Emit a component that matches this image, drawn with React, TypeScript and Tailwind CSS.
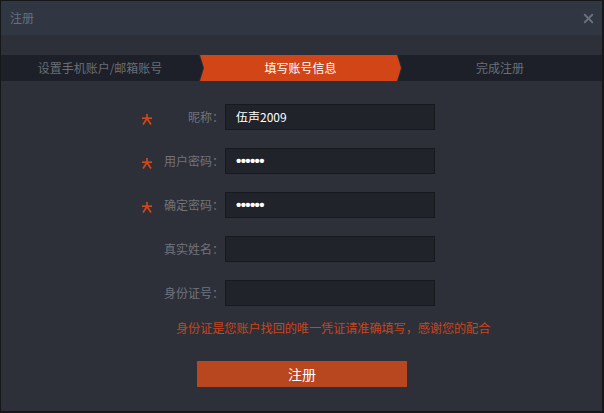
import { X } from "lucide-react";

const font = { fontFamily: '"Noto Sans CJK SC", "Microsoft YaHei", sans-serif' };

type Field = {
  label: string;
  required?: boolean;
  value?: string;
  password?: boolean;
};

const fields: Field[] = [
  { label: "昵称：", required: true, value: "伍声2009" },
  { label: "用户密码：", required: true, value: "••••••", password: true },
  { label: "确定密码：", required: true, value: "••••••", password: true },
  { label: "真实姓名：" },
  { label: "身份证号：" },
];

function Star() {
  return (
    <svg width="10" height="11" viewBox="0 0 10 11" className="mt-[5px]">
      <g stroke="#d1481b" strokeWidth="1.7" strokeLinecap="butt" fill="none">
        <line x1="5" y1="0" x2="5" y2="5" />
        <line x1="0" y1="4.2" x2="10" y2="4.2" />
        <line x1="5" y1="4.5" x2="1" y2="10.5" />
        <line x1="5" y1="4.5" x2="9" y2="10.5" />
      </g>
    </svg>
  );
}

function FormRow({ field }: { field: Field }) {
  return (
    <div className="flex items-center h-[26px] pl-[138px]">
      <div className="w-[16px] flex justify-center">{field.required && <Star />}</div>
      <div className="w-[70px] text-right text-[12px] text-[#70747d] pr-[1px]">
        {field.label}
      </div>
      <div className="w-[210px] h-[26px] bg-[#21232b] border border-[#18191e] flex items-center pl-[10px]">
        {field.value && (
          <span
            className={
              field.password
                ? "text-white text-[15px] font-bold"
                : "text-white text-[12px]"
            }
            style={field.password ? { fontFamily: '"Liberation Sans", sans-serif', letterSpacing: "-0.6px" } : undefined}
          >
            {field.value}
          </span>
        )}
      </div>
    </div>
  );
}

export default function App() {
  return (
    <div
      style={font}
      className="w-[604px] h-[413px] bg-[#2d3039] border-l border-t border-r-2 border-b-2 border-[#15171b] flex flex-col overflow-hidden"
    >
      <div className="h-[34px] bg-[#313643] flex items-center justify-between pl-[9px] pr-[6px] shrink-0">
        <span className="text-[12px] text-[#69707d]">注册</span>
        <X className="w-[15px] h-[15px] text-[#6b717c]" strokeWidth={3} />
      </div>

      <div className="pt-[20px] flex h-[46px] shrink-0">
        <div
          className="w-[202px] h-[26px] bg-[#1d2028] flex items-center justify-center text-[12px] text-[#6a6e76] pr-[4px]"
          style={{ clipPath: "polygon(0 0, calc(100% - 4px) 0, 100% 50%, calc(100% - 4px) 100%, 0 100%)" }}
        >
          设置手机账户/邮箱账号
        </div>
        <div
          className="w-[201px] -ml-[3px] h-[26px] bg-[#d14516] flex items-center justify-center text-[12px] text-white"
          style={{ clipPath: "polygon(0 0, calc(100% - 4px) 0, 100% 50%, calc(100% - 4px) 100%, 0 100%, 4px 50%)" }}
        >
          填写账号信息
        </div>
        <div
          className="flex-1 -ml-[3px] h-[26px] bg-[#1d2028] flex items-center justify-center text-[12px] text-[#6a6e76]"
          style={{ clipPath: "polygon(0 0, 100% 0, 100% 100%, 0 100%, 4px 50%)" }}
        >
          完成注册
        </div>
      </div>

      <div className="pt-[23px] flex flex-col gap-[18px]">
        {fields.map((f) => (
          <FormRow key={f.label} field={f} />
        ))}
      </div>

      <div className="mt-[13px] pl-[175px] text-[12.2px] tracking-[-0.1px] text-[#c9441a] leading-[18px]">
        身份证是您账户找回的唯一凭证请准确填写，感谢您的配合
      </div>

      <div className="mt-[24px] pl-[196px]">
        <button className="w-[210px] h-[26px] bg-[#b8461f] text-white text-[14px] flex items-center justify-center">
          注册
        </button>
      </div>
    </div>
  );
}
